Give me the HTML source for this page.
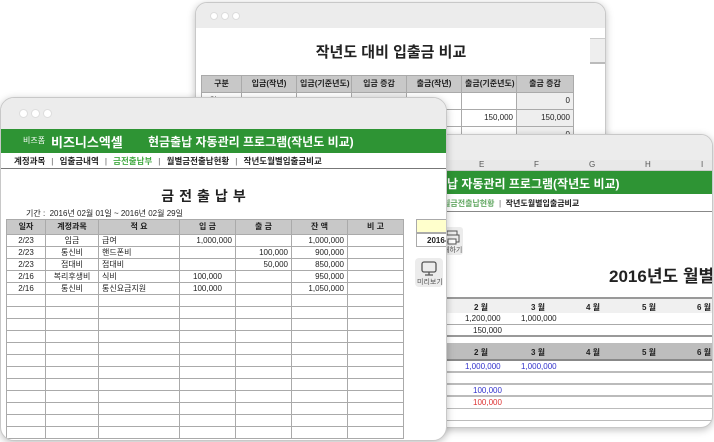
<!DOCTYPE html>
<html><head><meta charset="utf-8"><style>
*{margin:0;padding:0;box-sizing:border-box}
body{width:714px;height:442px;overflow:hidden;background:#fff;font-family:"Liberation Sans","Noto Sans CJK KR",sans-serif;position:relative;color:#222}
.win{position:absolute;background:#fff;border:1px solid #c8c8c8;border-radius:12px;overflow:hidden;box-shadow:0 2px 8px rgba(0,0,0,.25)}
.bar{background:#ececec;position:absolute;left:0;right:0;top:0}
.dot{position:absolute;width:8px;height:8px;border-radius:50%;background:#fff;border:1px solid #ddd}
.abs{position:absolute;white-space:nowrap}
table{border-collapse:collapse;position:absolute;table-layout:fixed}
td{border:1px solid #aaa;font-size:8px;height:12px;line-height:10px;padding:0 3px;white-space:nowrap;overflow:hidden}
.g{background:#2e9434;color:#fff;position:absolute}
.sep{color:#999;margin:0 6px}
</style></head><body>

<!-- back window -->
<div class="win" style="left:195px;top:2px;width:411px;height:150px">
 <div class="bar" style="height:25px"></div>
 <div class="dot" style="left:14px;top:9px"></div><div class="dot" style="left:25px;top:9px"></div><div class="dot" style="left:36px;top:9px"></div>
 <div style="position:absolute;left:394px;top:35px;width:20px;height:26px;background:#eee;border-top:1px solid #ccc;border-bottom:2px solid #bbb"></div>
 <div class="abs" style="left:0;width:390px;text-align:center;top:38px;font-size:15px;font-weight:bold">작년도 대비 입출금 비교</div>
 <table style="left:5px;top:72px;width:372px">
  <tr style="background:#c8c8c8;font-weight:bold"><td style="width:40px;text-align:center;height:17px">구분</td><td style="width:55px;text-align:center">입금(작년)</td><td style="width:55px;text-align:center">입금(기준년도)</td><td style="width:55px;text-align:center">입금 증감</td><td style="width:55px;text-align:center">출금(작년)</td><td style="width:55px;text-align:center">출금(기준년도)</td><td style="width:57px;text-align:center">출금 증감</td></tr>
  <tr><td style="height:17px">1월</td><td></td><td></td><td style="background:#eee;text-align:right">0</td><td></td><td></td><td style="background:#eee;text-align:right">0</td></tr>
  <tr><td style="height:17px"></td><td></td><td></td><td style="background:#eee"></td><td></td><td style="text-align:right">150,000</td><td style="background:#eee;text-align:right">150,000</td></tr>
  <tr><td style="height:17px"></td><td></td><td></td><td style="background:#eee"></td><td></td><td></td><td style="background:#eee;text-align:right">0</td></tr>
 </table>
</div>

<!-- right window -->
<div class="win" style="left:380px;top:134px;width:333px;height:294px">
 <div class="bar" style="height:25px"></div>
 <div style="position:absolute;left:0;right:0;top:25px;height:11px;background:#e8e8e8;border-bottom:1px solid #ccc;font-size:8px;color:#555">
  <span class="abs" style="left:98px">E</span><span class="abs" style="left:153px">F</span><span class="abs" style="left:208px">G</span><span class="abs" style="left:264px">H</span><span class="abs" style="left:320px">I</span>
 </div>
 <div class="g" style="left:0;right:0;top:36px;height:23px"><span class="abs" style="left:66px;top:4px;font-size:12px;font-weight:bold">납 자동관리 프로그램(작년도 비교)</span></div>
 <div class="abs" style="left:62px;top:63px;font-size:8px;font-weight:bold"><span style="color:#6a6">월금전출납현황</span> <span style="color:#999">&nbsp;|&nbsp;</span> 작년도월별입출금비교</div>
 <div style="position:absolute;left:0;right:0;top:76px;border-top:1px solid #888"></div>
 <div style="position:absolute;left:62px;top:92px;width:20px;height:28px;background:#ececec;border-radius:3px">
  <svg width="20" height="18" style="position:absolute;left:0;top:0"><rect x="4" y="4" width="10" height="4" fill="none" stroke="#555"/><rect x="2" y="8" width="14" height="7" fill="none" stroke="#555"/><rect x="5" y="12" width="8" height="5" fill="#fff" stroke="#555"/></svg>
  <span class="abs" style="left:0;top:18px;font-size:7px;color:#555">쇄하기</span>
 </div>
 <div class="abs" style="left:228px;top:127px;font-size:17px;font-weight:bold">2016년도 월별</div>
 <div style="position:absolute;left:0;right:0;top:162px;height:16px;background:#f0f0f0;border-top:2px solid #999;font-size:8px;font-weight:bold">
  <span class="abs" style="left:93px;top:3px">2 월</span><span class="abs" style="left:150px;top:3px">3 월</span><span class="abs" style="left:205px;top:3px">4 월</span><span class="abs" style="left:261px;top:3px">5 월</span><span class="abs" style="left:316px;top:3px">6 월</span></div>
 <div style="position:absolute;left:0;right:0;top:178px;height:12px;border-bottom:1px solid #aaa;font-size:8px"><span class="abs" style="left:84px;top:1px">1,200,000</span><span class="abs" style="left:140px;top:1px">1,000,000</span></div>
 <div style="position:absolute;left:0;right:0;top:190px;height:12px;border-bottom:2px solid #999;font-size:8px"><span class="abs" style="left:92px;top:1px">150,000</span></div>
 <div style="position:absolute;left:0;right:0;top:208px;height:18px;background:#bdbdbd;border-bottom:2px solid #888;font-size:8px;font-weight:bold">
  <span class="abs" style="left:93px;top:4px">2 월</span><span class="abs" style="left:150px;top:4px">3 월</span><span class="abs" style="left:205px;top:4px">4 월</span><span class="abs" style="left:261px;top:4px">5 월</span><span class="abs" style="left:316px;top:4px">6 월</span></div>
 <div style="position:absolute;left:0;right:0;top:226px;height:12px;border-bottom:2px solid #bbb;font-size:8px;color:#33c"><span class="abs" style="left:84px;top:1px">1,000,000</span><span class="abs" style="left:140px;top:1px">1,000,000</span></div>
 <div style="position:absolute;left:0;right:0;top:238px;height:12px;border-bottom:2px solid #bbb"></div>
 <div style="position:absolute;left:0;right:0;top:250px;height:12px;border-bottom:2px solid #bbb;font-size:8px;color:#33c"><span class="abs" style="left:92px;top:1px">100,000</span></div>
 <div style="position:absolute;left:0;right:0;top:262px;height:12px;border-bottom:1px solid #bbb;font-size:8px;color:#d33"><span class="abs" style="left:92px;top:1px">100,000</span></div>
 <div style="position:absolute;left:0;right:0;top:274px;height:12px;border-bottom:1px solid #bbb"></div>
</div>

<!-- front window -->
<div class="win" style="left:0;top:97px;width:447px;height:344px;border-radius:14px">
 <div class="bar" style="height:31px"></div>
 <div class="dot" style="left:18px;top:11px;width:9px;height:9px"></div><div class="dot" style="left:30px;top:11px;width:9px;height:9px"></div><div class="dot" style="left:42px;top:11px;width:9px;height:9px"></div>
 <div class="g" style="left:0;right:0;top:31px;height:24px">
  <span class="abs" style="left:22px;top:6px;font-size:8px">비즈폼</span>
  <span class="abs" style="left:50px;top:3px;font-size:13px;font-weight:bold">비즈니스엑셀</span>
  <span class="abs" style="left:147px;top:4px;font-size:12px;font-weight:bold">현금출납 자동관리 프로그램(작년도 비교)</span>
 </div>
 <div class="abs" style="left:13px;top:57px;font-size:8.5px;font-weight:bold">계정과목<span class="sep">|</span>입출금내역<span class="sep">|</span><span style="color:#4a4">금전출납부</span><span class="sep">|</span>월별금전출납현황<span class="sep">|</span>작년도월별입출금비교</div>
 <div style="position:absolute;left:0;right:0;top:70px;border-top:1px solid #777"></div>
 <div class="abs" style="left:0;width:410px;text-align:center;top:88px;font-size:14px;font-weight:bold;letter-spacing:5px">금전출납부</div>
 <div class="abs" style="left:25px;top:110px;font-size:8px">기간 :&nbsp; 2016년 02월 01일 ~ 2016년 02월 29일</div>
 <table style="left:5px;top:121px;width:397px">
  <tr style="background:#c8c8c8;font-weight:bold;text-align:center"><td style="width:39px;height:15px">일자</td><td style="width:53px">계정과목</td><td style="width:81px">적 요</td><td style="width:56px">입 금</td><td style="width:56px">출 금</td><td style="width:56px">잔 액</td><td style="width:56px">비 고</td></tr>
  <tr><td style="text-align:center">2/23</td><td style="text-align:center">임금</td><td>급여</td><td style="text-align:right">1,000,000</td><td></td><td style="text-align:right">1,000,000</td><td></td></tr>
  <tr><td style="text-align:center">2/23</td><td style="text-align:center">통신비</td><td>핸드폰비</td><td></td><td style="text-align:right">100,000</td><td style="text-align:right">900,000</td><td></td></tr>
  <tr><td style="text-align:center">2/23</td><td style="text-align:center">접대비</td><td>접대비</td><td></td><td style="text-align:right">50,000</td><td style="text-align:right">850,000</td><td></td></tr>
  <tr><td style="text-align:center">2/16</td><td style="text-align:center">복리후생비</td><td>식비</td><td style="text-align:center">100,000</td><td></td><td style="text-align:right">950,000</td><td></td></tr>
  <tr><td style="text-align:center">2/16</td><td style="text-align:center">통신비</td><td>통신요금지원</td><td style="text-align:center">100,000</td><td></td><td style="text-align:right">1,050,000</td><td></td></tr>
  <tr><td></td><td></td><td></td><td></td><td></td><td></td><td></td></tr>
  <tr><td></td><td></td><td></td><td></td><td></td><td></td><td></td></tr>
  <tr><td></td><td></td><td></td><td></td><td></td><td></td><td></td></tr>
  <tr><td></td><td></td><td></td><td></td><td></td><td></td><td></td></tr>
  <tr><td></td><td></td><td></td><td></td><td></td><td></td><td></td></tr>
  <tr><td></td><td></td><td></td><td></td><td></td><td></td><td></td></tr>
  <tr><td></td><td></td><td></td><td></td><td></td><td></td><td></td></tr>
  <tr><td></td><td></td><td></td><td></td><td></td><td></td><td></td></tr>
  <tr><td></td><td></td><td></td><td></td><td></td><td></td><td></td></tr>
  <tr><td></td><td></td><td></td><td></td><td></td><td></td><td></td></tr>
  <tr><td></td><td></td><td></td><td></td><td></td><td></td><td></td></tr>
  <tr><td></td><td></td><td></td><td></td><td></td><td></td><td></td></tr>
 </table>
 <div style="position:absolute;left:415px;top:121px;width:40px;height:14px;background:#ffffcc;border:1px solid #aaa"></div>
 <div style="position:absolute;left:415px;top:135px;width:40px;height:14px;border:1px solid #aaa;font-size:8px;font-weight:bold;padding:2px 0 0 10px">2016-</div>
 <div style="position:absolute;left:414px;top:160px;width:28px;height:29px;background:#ececec;border-radius:4px">
  <svg width="28" height="18" style="position:absolute;left:0;top:2px"><rect x="7" y="2" width="14" height="10" rx="2" fill="none" stroke="#555" stroke-width="1.3"/><path d="M14 12v3M10 15h8" stroke="#555" stroke-width="1.3"/></svg>
  <span class="abs" style="left:2px;top:19px;font-size:7px;color:#555">미리보기</span>
 </div>
</div>
</body></html>
